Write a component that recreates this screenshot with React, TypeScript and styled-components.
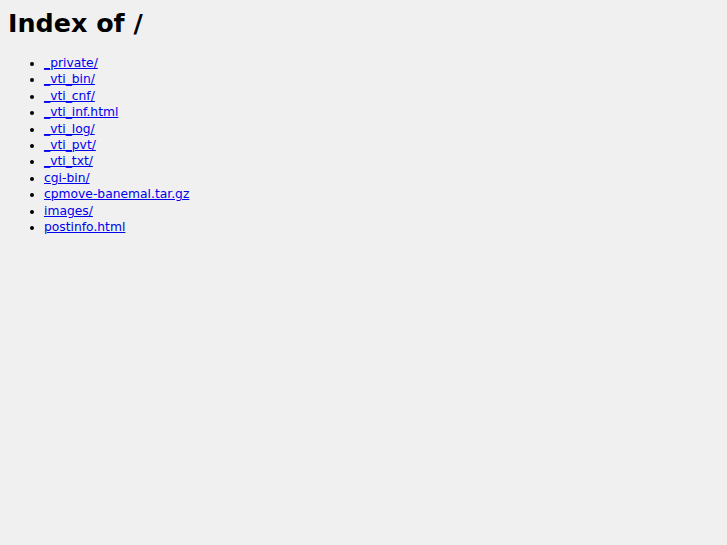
import React from 'react';
import styled, { createGlobalStyle } from 'styled-components';

const GlobalStyle = createGlobalStyle`
    html, body {
        background: #f0f0f0;
    }
    body {
        margin: 8px;
        font-family: "DejaVu Sans", sans-serif;
        font-size: 12.3px;
        color: #000;
    }
`;

const Heading = styled.h1`
    font-size: 25.4px;
    font-weight: bold;
    margin: 0 0 17px 0;
    line-height: 30px;
`;

const Listing = styled.ul`
    margin: 0;
    padding-left: 36px;
    list-style: disc;
`;

const Entry = styled.li`
    line-height: 16.4px;
`;

const EntryLink = styled.a`
    color: #0000ee;
    text-decoration: underline;
`;

const entries = [
    '_private/',
    '_vti_bin/',
    '_vti_cnf/',
    '_vti_inf.html',
    '_vti_log/',
    '_vti_pvt/',
    '_vti_txt/',
    'cgi-bin/',
    'cpmove-banemal.tar.gz',
    'images/',
    'postinfo.html',
];

const App: React.FunctionComponent = () => (
    <>
        <GlobalStyle />
        <Heading>Index of /</Heading>
        <Listing>
            {entries.map((name) => (
                <Entry key={name}>
                    <EntryLink href={`/${name}`}>{name}</EntryLink>
                </Entry>
            ))}
        </Listing>
    </>
);

export default App;
